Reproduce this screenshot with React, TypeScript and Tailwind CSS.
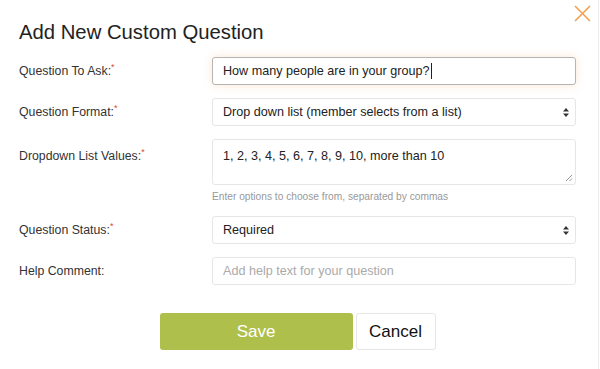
function Label({ text, required }: { text: string; required?: boolean }) {
  return (
    <div className="w-[193px] shrink-0 text-[12.3px] text-[#333]">
      {text}
      {required && <span className="text-[#e0453a] text-[9px] align-top relative top-[-1px]">*</span>}
    </div>
  );
}

function SelectBox({ value }: { value: string }) {
  return (
    <div className="flex-1 h-[28px] flex items-center justify-between pl-[10px] pr-[4px] border border-[#e6e6e6] rounded-[3px] bg-white text-[12.6px] text-[#222]">
      <span>{value}</span>
      <svg width="8" height="11" viewBox="0 0 8 11" className="mr-[1px]">
        <path d="M4 1 L7 4.5 H1 Z" fill="#333" />
        <path d="M4 10 L7 6.5 H1 Z" fill="#333" />
      </svg>
    </div>
  );
}

export default function App() {
  return (
    <main className="w-[600px] h-[369px] bg-white relative overflow-hidden font-['Liberation_Sans',Arial,sans-serif]">
      <div className="absolute top-0 right-[1px] w-px h-full bg-[#ececec]" />
      {/* close */}
      <button className="absolute top-[5px] right-[9px] w-[17px] h-[17px]">
        <svg width="17" height="17" viewBox="0 0 17 17">
          <path d="M1 1 L16 16 M16 1 L1 16" stroke="#f4a14f" strokeWidth="1.6" />
        </svg>
      </button>

      <div className="pl-[19px] pr-[24px]">
        <h1 className="pt-[18px] text-[20.3px] leading-[28px] text-[#222]">Add New Custom Question</h1>

        <div className="mt-[11px] flex items-center">
          <Label text="Question To Ask:" required />
          <div className="flex-1 h-[28px] flex items-center pl-[10px] border border-[#b5b5b5] rounded-[3px] bg-white text-[12.6px] text-[#222] shadow-[0_0_8px_rgba(245,180,120,0.35)]">
            How many people are in your group?<span className="inline-block w-px h-[16px] bg-[#222] ml-[1px]" />
          </div>
        </div>

        <div className="mt-[13px] flex items-center">
          <Label text="Question Format:" required />
          <SelectBox value="Drop down list (member selects from a list)" />
        </div>

        <div className="mt-[13px] flex items-start">
          <div className="pt-[8px]">
            <Label text="Dropdown List Values:" required />
          </div>
          <div className="flex-1">
            <div className="h-[46px] relative border border-[#e6e6e6] rounded-[3px] pl-[10px] pt-[7px] text-[12.6px] text-[#222]">
              1, 2, 3, 4, 5, 6, 7, 8, 9, 10, more than 10
              <svg width="8" height="8" viewBox="0 0 8 8" className="absolute right-[2px] bottom-[2px]">
                <path d="M7 1 L1 7 M7 4.5 L4.5 7" stroke="#888" strokeWidth="0.9" />
              </svg>
            </div>
            <div className="mt-[4px] text-[10.2px] text-[#999]">Enter options to choose from, separated by commas</div>
          </div>
        </div>

        <div className="mt-[12px] flex items-center">
          <Label text="Question Status:" required />
          <SelectBox value="Required" />
        </div>

        <div className="mt-[13px] flex items-center">
          <Label text="Help Comment:" />
          <div className="flex-1 h-[28px] flex items-center pl-[10px] border border-[#e6e6e6] rounded-[3px] bg-white text-[12.6px] text-[#aaa]">
            Add help text for your question
          </div>
        </div>

        <div className="mt-[28px] flex justify-center gap-[3px]">
          <button className="w-[193px] h-[37px] rounded-[3px] bg-[#afbf4b] text-white text-[17px]">Save</button>
          <button className="w-[80px] h-[37px] rounded-[3px] bg-white border border-[#e6e6e6] text-[#111] text-[17px]">Cancel</button>
        </div>
      </div>
    </main>
  );
}
